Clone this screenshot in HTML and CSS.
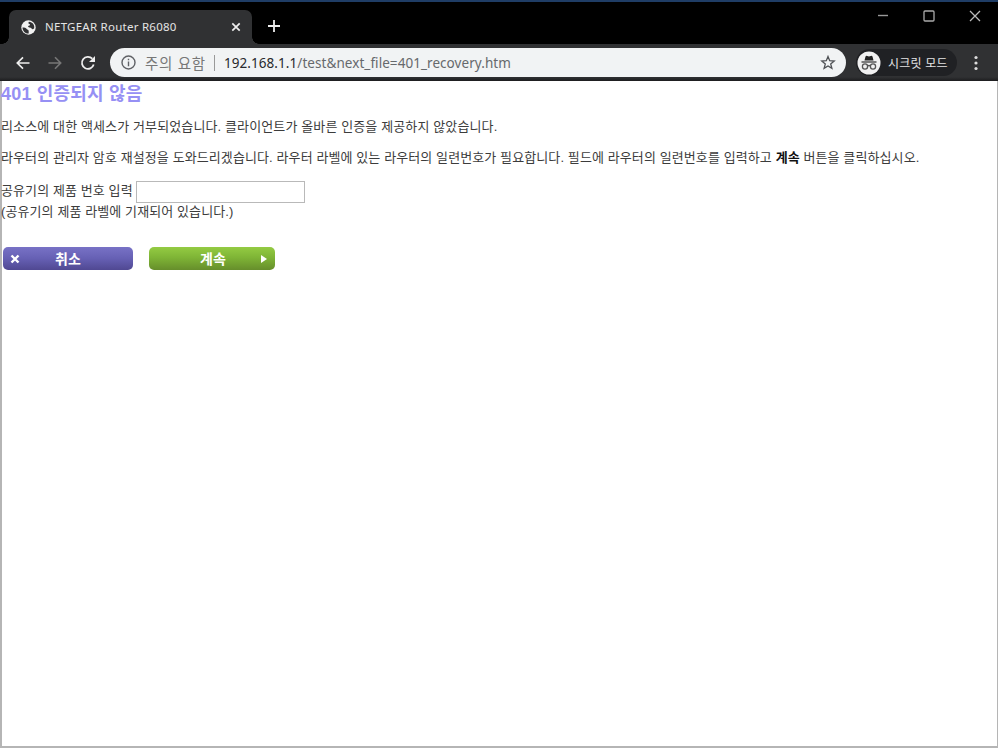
FILE: index.html
```html
<!DOCTYPE html>
<html lang="ko">
<head>
<meta charset="utf-8">
<title>NETGEAR Router R6080</title>
<link rel="stylesheet" href="styles.css">
</head>
<body>
<div class="window">
  <header class="titlebar">
    <div class="tab">
      <svg class="globe" width="15" height="15" viewBox="0 0 15 15"><circle cx="7.5" cy="7.5" r="7.2" fill="#f1f1f1"/><path d="M1.5 7.5c2 0 3.5.2 4.2 1.5.6 1 2 .6 2 2.200v2.300C4.200 13.800 1.500 11 1.500 7.500zM8 1.700c-1 .8-.7 2 .4 2.300 1.200.3.600 1.800-.6 1.800-1.200.2-.8 1.500.4 1.600 1.400 0 2.200.7 3 1.500.7.500 1.600.2 2-.6C13.700 4.700 11.500 2 8 1.700z" fill="#303133"/></svg>
      <span class="tab-title">NETGEAR Router R6080</span>
      <svg class="tab-close" width="10" height="10" viewBox="0 0 10 10"><path d="M1.300 1.300l7.400 7.400M8.700 1.300L1.300 8.700" stroke="#eee" stroke-width="1.700"/></svg>
    </div>
    <svg class="new-tab" width="14" height="14" viewBox="0 0 14 14"><path d="M7 1v12M1 7h12" stroke="#eee" stroke-width="1.800"/></svg>
    <div class="controls">
      <svg width="12" height="12" viewBox="0 0 12 12"><path d="M1 5.500h10" stroke="#999" stroke-width="1.400"/></svg>
      <svg width="12" height="12" viewBox="0 0 12 12"><rect x="1" y="1" width="10" height="10" rx="1" fill="none" stroke="#aaa" stroke-width="1.300"/></svg>
      <svg width="12" height="12" viewBox="0 0 12 12"><path d="M1 1l10 10M11 1L1 11" stroke="#bbb" stroke-width="1.300"/></svg>
    </div>
  </header>
  <nav class="toolbar">
    <svg width="14" height="14" viewBox="0 0 14 14"><path d="M13.500 7H1.500M7 1.300L1.300 7 7 12.700" fill="none" stroke="#eee" stroke-width="1.700"/></svg>
    <svg class="forward" width="14" height="14" viewBox="0 0 14 14"><path d="M.5 7h12M7 1.300L12.700 7 7 12.700" fill="none" stroke="#777" stroke-width="1.600"/></svg>
    <svg class="reload" width="16" height="16" viewBox="0 0 16 16"><path d="M13.700 9.500A6 6 0 1 1 12.300 3.700" fill="none" stroke="#eee" stroke-width="1.800"/><path d="M15 1v6H9z" fill="#eee"/></svg>
    <div class="address">
      <svg width="15" height="15" viewBox="0 0 15 15"><circle cx="7.500" cy="7.500" r="6.500" fill="none" stroke="#606266" stroke-width="1.400"/><path d="M7.500 6.500v4.700M7.500 3.800v1.500" stroke="#606266" stroke-width="1.400"/></svg>
      <span class="warn">주의 요함</span>
      <span class="sep"></span>
      <span class="url"><span class="host">192.168.1.1</span>/test&amp;next_file=401_recovery.htm</span>
      <svg class="star" width="16" height="15" viewBox="0 0 16 15"><path d="M8 1.500l1.700 4.200 4.500.3-3.500 2.900 1.200 4.400L8 10.900l-3.900 2.400 1.200-4.400L1.800 6l4.500-.3z" fill="none" stroke="#505256" stroke-width="1.300"/></svg>
    </div>
    <div class="incognito">
      <svg width="24" height="24" viewBox="0 0 24 24"><circle cx="12" cy="12" r="11.500" fill="#f1f1f1"/><path d="M8.500 5.500l.8-.7 2.700.6 2.700-.6.800.7 1 4h-9z" fill="#222"/><path d="M4.500 11h15" stroke="#555" stroke-width="1.500"/><g fill="none" stroke="#555" stroke-width="1.300"><circle cx="8" cy="15.500" r="2.600"/><circle cx="16" cy="15.500" r="2.600"/><path d="M10.500 15q1.500-1 3 0"/></g></svg>
      <span>시크릿 모드</span>
    </div>
    <svg class="menu" width="4" height="16" viewBox="0 0 4 16"><g fill="#ddd"><circle cx="2" cy="2.500" r="1.600"/><circle cx="2" cy="8" r="1.600"/><circle cx="2" cy="13.500" r="1.600"/></g></svg>
  </nav>
  <main class="page">
    <h1>401 인증되지 않음</h1>
    <p class="denied">리소스에 대한 액세스가 거부되었습니다. 클라이언트가 올바른 인증을 제공하지 않았습니다.</p>
    <p class="help">라우터의 관리자 암호 재설정을 도와드리겠습니다. 라우터 라벨에 있는 라우터의 일련번호가 필요합니다. 필드에 라우터의 일련번호를 입력하고 <b>계속</b> 버튼을 클릭하십시오.</p>
    <div class="field"><label for="serial">공유기의 제품 번호 입력</label><input id="serial" type="text"></div>
    <p class="hint">(공유기의 제품 라벨에 기재되어 있습니다.)</p>
    <div class="actions">
      <button class="btn cancel"><svg width="10" height="10" viewBox="0 0 10 10"><path d="M1.500 1.500l7 7M8.500 1.500l-7 7" stroke="#fff" stroke-width="2.400"/></svg><span>취소</span></button>
      <button class="btn next"><span>계속</span><svg width="6" height="8" viewBox="0 0 6 8"><path d="M0 0l6 4-6 4z" fill="#fff"/></svg></button>
    </div>
  </main>
</div>
</body>
</html>
```
FILE: styles.css
```css
* { box-sizing: border-box; }
body { margin: 0; background: #fff; font-family: "Liberation Sans", "Noto Sans CJK KR", sans-serif; overflow: hidden; }
svg { display: block; flex: none; }
.window { width: 998px; height: 748px; display: flex; flex-direction: column; border-bottom: 2px solid #b5b5b5; }
.titlebar { height: 44px; flex: none; display: flex; background: #000; border-top: 2px solid #1f3d66; }
.tab { position: relative; width: 243px; height: 34px; margin: 8px 0 0 9px; padding: 0 11px 0 12px; display: flex; align-items: center; background: #303133; border-radius: 7px 7px 0 0; }
.tab::before, .tab::after { content: ""; position: absolute; bottom: 0; width: 7px; height: 7px; }
.tab::before { left: -7px; background: radial-gradient(circle at 0 0, #000 6.500px, #303133 7px); }
.tab::after { right: -7px; background: radial-gradient(circle at 100% 0, #000 6.500px, #303133 7px); }
.tab-title { margin-left: 9px; padding-bottom: 2px; font: 11.500px "Noto Sans", sans-serif; letter-spacing: .25px; color: #e4e4e4; white-space: nowrap; }
.tab-close { margin-left: auto; }
.new-tab { margin: 17px 0 0 15px; }
.controls { display: flex; gap: 34px; margin: 8px 17px 0 auto; }
.toolbar { height: 37px; flex: none; display: flex; align-items: center; padding: 0 20px 0 16px; background: linear-gradient(#303133 33px, #1d1d1f); }
.forward { margin-left: 18px; }
.reload { margin-left: 18px; }
.address { width: 736px; height: 29px; margin-left: 14px; padding: 0 10px 0 11px; display: flex; align-items: center; background: #f1f3f4; border-radius: 15px; white-space: nowrap; }
.warn { margin-left: 9px; width: 61px; font-size: 14.500px; letter-spacing: .7px; color: #777; }
.sep { width: 1px; height: 16px; margin: 0 9px 0 8px; background: #999; }
.url { font: 13.500px "Noto Sans", sans-serif; letter-spacing: .06px; color: #66696c; }
.host { color: #292a2d; }
.star { margin-left: auto; }
.incognito { width: 101px; height: 27px; margin-left: 10px; padding-left: 1px; display: flex; align-items: center; gap: 7px; background: #202124; border-radius: 14px; color: #e4e4e4; font-size: 12px; letter-spacing: .2px; white-space: nowrap; }
.menu { margin-left: auto; }
.page { flex: 1; background: #fff; border-left: 2px solid #b5b5b5; border-right: 1px solid #b5b5b5; color: #3c3c3c; font-size: 13px; line-height: 20px; letter-spacing: .1px; white-space: nowrap; }
h1, p, label { margin: 0 0 0 -1px; }
h1 { height: 25px; padding-top: 1px; line-height: 25px; font-size: 18px; font-weight: bold; letter-spacing: .2px; color: #9690f4; }
.denied { margin-top: 11px; letter-spacing: .12px; }
.help { margin-top: 11px; }
b { color: #111; }
.field { height: 23px; margin-top: 12px; display: flex; align-items: center; gap: 3px; }
.field label { padding-bottom: 1px; }
.field input { width: 169px; height: 22px; margin: 0; border: 1px solid #b9b9b9; background: #fff; outline: none; }
.hint { margin-top: -1px; }
.actions { display: flex; gap: 16px; margin: 25px 0 0 1px; }
.btn { height: 23px; padding: 0 8px 0 7px; display: flex; align-items: center; border: 0; border-radius: 5px; color: #fff; font: bold 14px "Noto Sans CJK KR", sans-serif; line-height: 22px; }
.btn span { padding-bottom: 2px; }
.cancel { width: 130px; background: linear-gradient(#7872c6, #6660b4 50%, #504892); }
.cancel span { margin-left: 35px; }
.next { width: 126px; background: linear-gradient(#94cb43, #7fb536 45%, #668e2b); }
.next span { margin-left: 44px; }
.next svg { margin-left: auto; }
```
